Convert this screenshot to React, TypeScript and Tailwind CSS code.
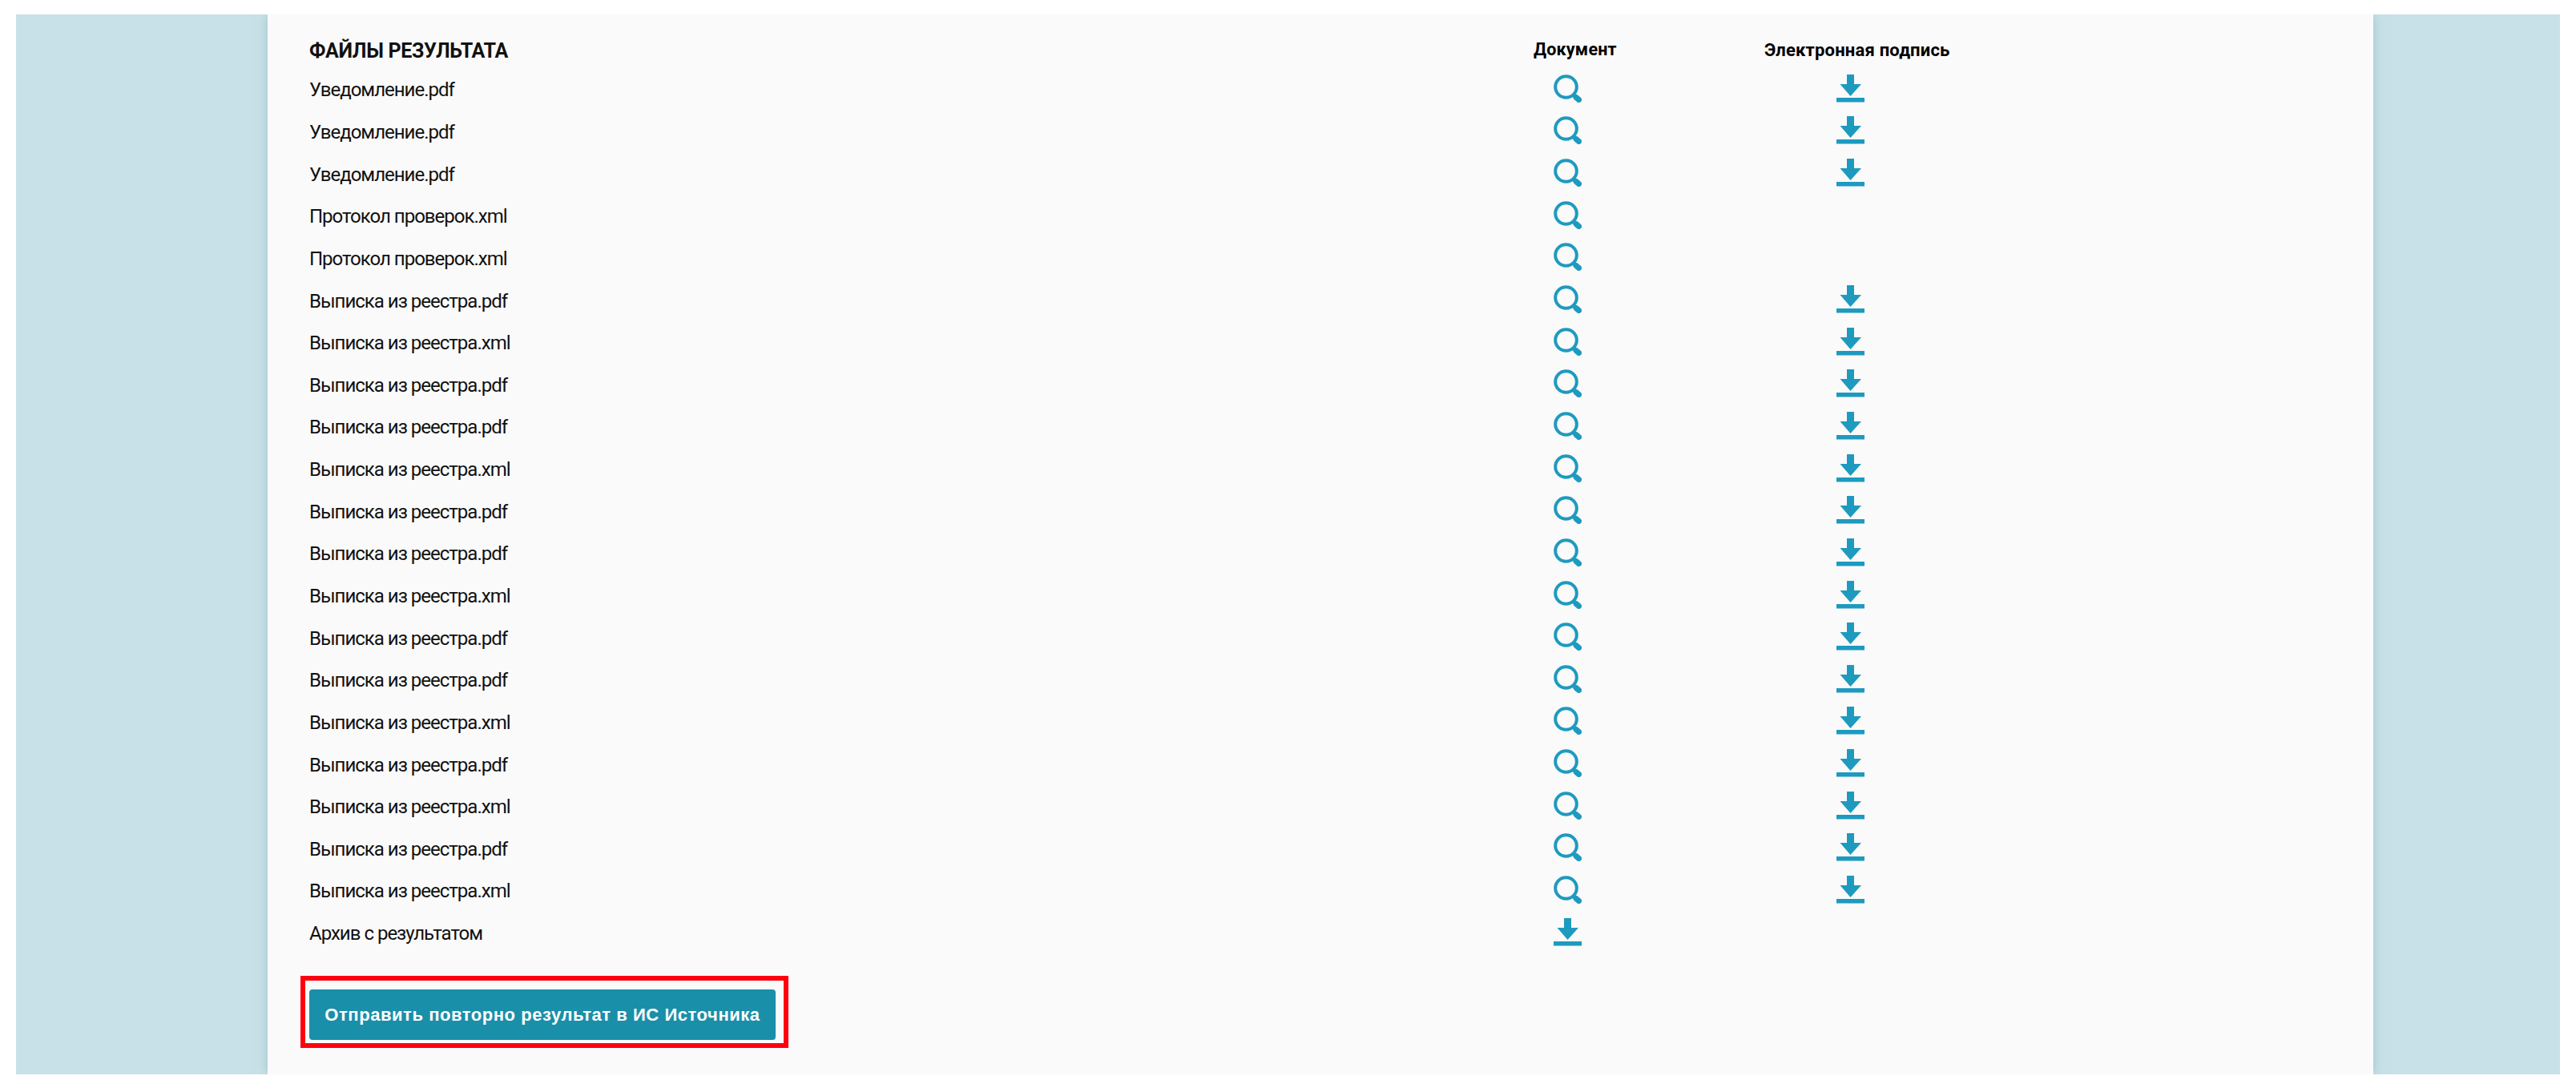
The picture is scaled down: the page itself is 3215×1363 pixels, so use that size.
const files = [
  { name: "Уведомление.pdf", sign: true },
  { name: "Уведомление.pdf", sign: true },
  { name: "Уведомление.pdf", sign: true },
  { name: "Протокол проверок.xml", sign: false },
  { name: "Протокол проверок.xml", sign: false },
  { name: "Выписка из реестра.pdf", sign: true },
  { name: "Выписка из реестра.xml", sign: true },
  { name: "Выписка из реестра.pdf", sign: true },
  { name: "Выписка из реестра.pdf", sign: true },
  { name: "Выписка из реестра.xml", sign: true },
  { name: "Выписка из реестра.pdf", sign: true },
  { name: "Выписка из реестра.pdf", sign: true },
  { name: "Выписка из реестра.xml", sign: true },
  { name: "Выписка из реестра.pdf", sign: true },
  { name: "Выписка из реестра.pdf", sign: true },
  { name: "Выписка из реестра.xml", sign: true },
  { name: "Выписка из реестра.pdf", sign: true },
  { name: "Выписка из реестра.xml", sign: true },
  { name: "Выписка из реестра.pdf", sign: true },
  { name: "Выписка из реестра.xml", sign: true },
];

function SearchIcon() {
  return (
    <svg width="35" height="35" viewBox="0 0 35 35" fill="none" className="block">
      <circle cx="15.5" cy="15.5" r="13.3" stroke="#1e9abf" strokeWidth="4" />
      <path d="M24 25l4 4" stroke="#1e9abf" strokeWidth="4" />
      <path d="M28 28.5l3.5 3" stroke="#1e9abf" strokeWidth="7" strokeLinecap="round" />
    </svg>
  );
}

function DownloadIcon() {
  return (
    <svg width="35" height="35" viewBox="0 0 35 35" className="block">
      <path d="M13 0h9v12h9L17.5 27 4.500 12H13z" fill="#1e9abf" />
      <rect x="0" y="29" width="35" height="5.500" fill="#1e9abf" />
    </svg>
  );
}

export default function App() {
  return (
    <div className="px-[20px] py-[18px] bg-white min-h-[1363px] font-['Roboto',sans-serif]">
      <div className="bg-[#c8e1e8] h-[1323px] pl-[314px] pr-[233px] overflow-hidden">
        <div className="bg-[#fafafa] h-full pt-[22px] pl-[52px] shadow-[0_0_12px_rgba(130,170,180,0.55)]">
          <div className="grid grid-cols-[1528px_288px_1fr] h-[44px] items-center text-black">
            <div className="text-[25px] font-bold tracking-[-0.3px] uppercase text-[#111] pt-[3px]">Файлы результата</div>
            <div className="text-[21.500px] font-bold tracking-[0.2px] pt-[1px]">Документ</div>
            <div className="text-[22px] font-bold tracking-[0.2px] pt-[1px]">Электронная подпись</div>
          </div>
          {files.map((f, i) => (
            <div key={i} className="grid grid-cols-[1528px_288px_1fr] h-[52.65px] items-center">
              <div className="text-[24px] tracking-[-1px] text-[#111] pt-[4px]">{f.name}</div>
              <div className="pl-[25px]"><SearchIcon /></div>
              <div className="pl-[90px]">{f.sign && <DownloadIcon />}</div>
            </div>
          ))}
          <div className="grid grid-cols-[1528px_288px_1fr] h-[52.65px] items-center">
            <div className="text-[24px] tracking-[-1px] text-[#111] pt-[4px]">Архив с результатом</div>
            <div className="pl-[25px]"><DownloadIcon /></div>
          </div>
          <div className="relative mt-[46px] w-[582px]">
            <button className="w-[582px] h-[63px] bg-[#1a8fa9] rounded-[4px] text-white text-[22px] font-bold font-['Liberation_Sans',sans-serif] tracking-[0.55px]">
              Отправить повторно результат в ИС Источника
            </button>
            <div className="absolute left-[-11px] top-[-17px] w-[609px] h-[90px] border-[6px] border-[#ff0010]"></div>
          </div>
        </div>
      </div>
    </div>
  );
}
